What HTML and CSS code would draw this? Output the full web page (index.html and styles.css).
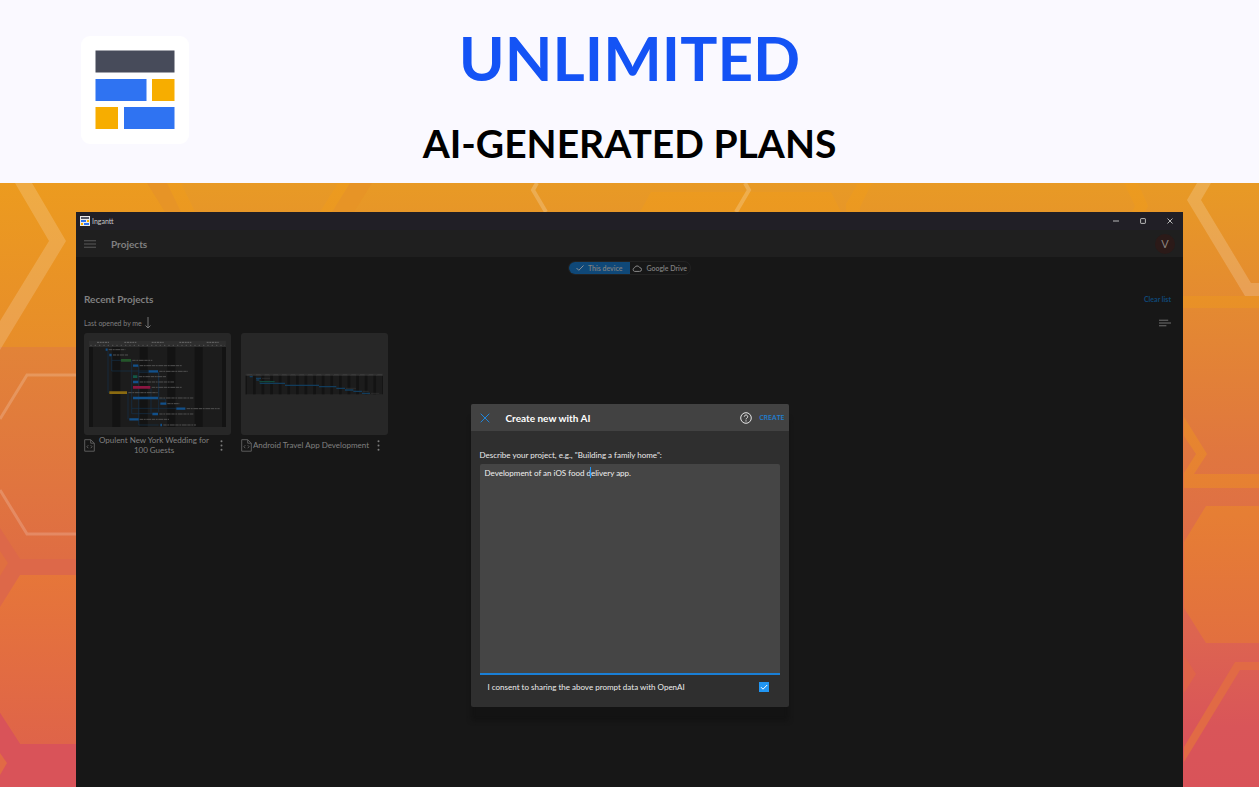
FILE: index.html
```html
<!DOCTYPE html>
<html lang="en">
<head>
<meta charset="utf-8">
<title>Ingantt</title>
<link rel="stylesheet" href="styles.css">
</head>
<body>
<header class="banner">
  <svg class="logo" viewBox="0 0 108 108" aria-label="Ingantt logo">
    <rect width="108" height="108" rx="9" fill="#fff"/>
    <path fill="#474b5a" d="M14.500 14.500h79v22h-79z"/>
    <path fill="#2f73f2" d="M14.500 43h51v22h-51zM43 71h50.500v22H43z"/>
    <path fill="#f7ad00" d="M71 43h22.500v22H71zM14.500 71H37v22H14.500z"/>
  </svg>
  <div class="headline">
    <h1 class="headline-main">UNLIMITED</h1>
    <p class="headline-sub">AI-GENERATED PLANS</p>
  </div>
</header>

<main class="stage">
  <svg class="backdrop" viewBox="0 183 1259 604" preserveAspectRatio="none" aria-hidden="true">
    <defs>
      <linearGradient id="base" x1="0" y1="183" x2="0" y2="787" gradientUnits="userSpaceOnUse">
        <stop offset="0" stop-color="#e89a25"/><stop offset=".2" stop-color="#e48a31"/>
        <stop offset=".45" stop-color="#e0763f"/><stop offset=".75" stop-color="#dd6450"/><stop offset=".9" stop-color="#d95559"/><stop offset="1" stop-color="#d95359"/>
      </linearGradient>
      <linearGradient id="warm" x1="0" y1="183" x2="0" y2="787" gradientUnits="userSpaceOnUse">
        <stop offset="0" stop-color="#ec9b1f"/><stop offset=".27" stop-color="#e78d2a"/>
        <stop offset=".55" stop-color="#e67e34"/><stop offset=".93" stop-color="#df6448"/><stop offset="1" stop-color="#e06a45"/>
      </linearGradient>
      <linearGradient id="mid" x1="0" y1="347" x2="0" y2="560" gradientUnits="userSpaceOnUse">
        <stop offset="0" stop-color="#e28338"/><stop offset="1" stop-color="#df6d43"/>
      </linearGradient>
      <linearGradient id="low" x1="0" y1="575" x2="0" y2="744" gradientUnits="userSpaceOnUse">
        <stop offset="0" stop-color="#e67639"/><stop offset="1" stop-color="#df6449"/>
      </linearGradient>
    </defs>
    <path fill="url(#base)" d="M0 183h1259v604H0z"/>
    <path fill="url(#warm)" d="M0 183h147l18 29H76v135H0z"/>
    <path fill="url(#mid)" d="M0 347h90v212H20L0 528z"/>
    <path fill="#dd6849" d="M0 528l20 31h70v16H20L0 607z"/>
    <path fill="#e06f40" d="M0 551l8 12-8 13z"/>
    <path fill="url(#low)" d="M0 607l20-32h70v169H20L0 713z"/>
    <path fill="#d95359" d="M0 713l20 31h70v43H0z"/>
    <path fill="#e16a45" d="M0 753l7 10-7 12z"/>
    <path fill="#fff" fill-opacity=".17" d="M15 183h17l34 58L0 350v-29l49-80z"/>
    <path fill="none" stroke="#fff" stroke-opacity=".18" stroke-width="3" d="M0 419l27-44h60M0 490l27 44h60"/>
    <path fill="#e79426" d="M147 183h30l18 29h-30zM342 183h30l-18 29h-30z"/>
    <path fill="url(#warm)" d="M167 183h14l14 29h-14zM338 183h12l-18 29h-12zM651 192h180l10 20H640zM858 183h14l-12 24v5h-14v-8zM1124 183h14l10 23-3 6h-13l3-6z"/>
    <path fill="none" stroke="#fff" stroke-opacity=".2" stroke-width="4" d="M537 183l-4 7 13 22M745 183l4 7-13 22"/>
    <path fill="#fff" fill-opacity=".18" d="M1197 183h14l-10 17 50 83h8v13h-14l-58-96z"/>
    <path fill="url(#warm)" d="M1170 296h89v12h-89zM1184 417l23 37-13 20h65v14h-75v-15l12-19-12-18zM1184 542l22-36h53v137h-53l-22-35z"/>
    <path fill="#df6449" d="M1184 655l12 19-12 19z"/>
    <path fill="#e16a45" d="M1259 662h-24l-51 85v15l56-92h19z"/>
  </svg>

  <section class="window">
    <div class="titlebar">
      <svg class="app-icon" viewBox="0 0 10 10" aria-hidden="true"><path fill="#e9e9e9" d="M0 0h10v10H0z"/><path fill="#555866" d="M1 1h8v2H1z"/><path fill="#2f73f2" d="M1 4h5v2H1zM4 7h5v2H4z"/><path fill="#f7ad00" d="M7 4h2v2H7zM1 7h2v2H1z"/></svg>
      <span class="app-name">Ingantt</span>
      <div class="win-controls">
        <button class="win-button" aria-label="Minimize"><svg viewBox="0 0 6 6"><path d="M0 3h6"/></svg></button>
        <button class="win-button" aria-label="Maximize"><svg viewBox="0 0 6 6"><rect x=".6" y=".6" width="4.800" height="4.800" rx=".5"/></svg></button>
        <button class="win-button" aria-label="Close"><svg viewBox="0 0 6 6"><path d="M.5.5l5 5M5.500.5l-5 5"/></svg></button>
      </div>
    </div>
    <div class="appbar">
      <button class="menu-button" aria-label="Menu"><svg viewBox="0 0 13 8"><path d="M0 .5h13M0 4h13M0 7.500h13"/></svg></button>
      <h2 class="appbar-title">Projects</h2>
      <button class="avatar">V</button>
    </div>
    <div class="content">
      <div class="source-switch">
        <button class="source source-active"><svg class="check" viewBox="0 0 8 6"><path d="M.5 3l2.300 2.300L7.500.5"/></svg>This device</button>
        <button class="source"><svg class="cloud" viewBox="0 0 10 7"><path d="M2.600 6.400h4.900a1.900 1.900 0 0 0 .2-3.800A2.800 2.800 0 0 0 2.500 2.800a1.850 1.850 0 0 0 .1 3.600z"/></svg>Google Drive</button>
      </div>
      <div class="row section-head"><h3 class="section-title">Recent Projects</h3><a class="clear" href="#">Clear list</a></div>
      <div class="row sort-row">
        <button class="sort">Last opened by me<svg class="arrow" viewBox="0 0 6 12"><path d="M3 0v11M.5 8.500L3 11l2.500-2.500"/></svg></button>
        <button class="view-mode" aria-label="List view"><svg viewBox="0 0 13 8"><path d="M0 1h10M0 4h13M0 7h8"/></svg></button>
      </div>
      <div class="cards">
        <article class="card">
          <svg class="thumb" viewBox="23 24 441 307" aria-hidden="true">
            <path fill="#1c1c1c" d="M38 66h411v240H38z"/>
            <path fill="#2e2e2e" d="M38 47h411v19H38z"/>
            <path fill="#131313" d="M38 66h12v240H38zM108 66h24v240h-24zM190 66h24v240h-24zM273 66h24v240h-24zM355 66h24v240h-24zM437 66h12v240h-12z"/>
            <path stroke="#686868" stroke-width="3" stroke-dasharray="6 2" d="M62 52h36M144 52h36M226 52h36M309 52h36M391 52h36"/>
            <path stroke="#555" stroke-width="3" stroke-dasharray="4 9" d="M42 61h404"/>
            <path fill="none" stroke="#15324b" stroke-width="2" d="M95 78v124h5M106 94v44h112M106 106h28M166 106v160h62M166 250h134M187 122v178h60M155 203v80M247 142v120M224 190v76M247 142v80h20v12M187 142h60"/>
            <path stroke="#12508a" stroke-width="7" d="M88 74h6M99 90h7M170 122h16M217 139h28M170 171h16M170 219h75M252 236h18M300 251h27M228 267h17M159 283h28M252 300h5"/>
            <path stroke="#24562a" stroke-width="8" d="M134 106h30"/><path stroke="#125746" stroke-width="8" d="M170 155h13"/>
            <path stroke="#8b1641" stroke-width="8" d="M170 187h52"/><path stroke="#8a6a10" stroke-width="8" d="M99 203h53"/>
            <path stroke="#505050" stroke-width="3" stroke-dasharray="10 2 6 2 14 2" d="M97 74h50M110 90h45M168 106h60M190 122h126M249 139h86M187 155h82M190 171h103M226 187h90M156 203h88M249 219h102M273 236h37M331 251h99M249 267h102M190 283h88M261 300h98"/>
          </svg>
          <div class="caption">
            <svg class="file" viewBox="0 0 11 13"><path d="M.7.7h6l3.600 3.500v8H.7zM6.700.7v3.500h3.600M4.300 6.200L2.900 7.700l1.400 1.500M6.700 6.200l1.400 1.500-1.400 1.500"/></svg>
            <span class="name">Opulent New York Wedding for 100 Guests</span>
            <button class="more" aria-label="More options"><svg viewBox="0 0 3 11"><circle cx="1.500" cy="1.200" r="1"/><circle cx="1.500" cy="5.500" r="1"/><circle cx="1.500" cy="9.800" r="1"/></svg></button>
          </div>
        </article>
        <article class="card">
          <svg class="thumb" viewBox="15 24 441 307" aria-hidden="true">
            <path fill="#1c1c1c" d="M29 152h412v56H29z"/><path fill="#303030" d="M29 146h412v7H29z"/>
            <path stroke="#414141" stroke-width="2" stroke-dasharray="14 12" d="M34 149h404"/>
            <path stroke="#131313" stroke-width="56" stroke-dasharray="8 17.800" d="M51 180h389"/>
            <path stroke="#131313" stroke-width="4" d="M31 152v56"/>
            <path fill="none" stroke="#123c5c" stroke-width="4" d="M41 155h9M60 160h15M61 165h9M71 175h76M147 181h102M249 185h52M301 190h26M327 195h25M352 199h26M378 205h24"/>
            <path stroke="#11483b" stroke-width="4" d="M70 170h46"/>
            <path stroke="#353535" stroke-width="2" d="M78 160h24M330 190h30M380 199h18M405 205h25"/>
          </svg>
          <div class="caption">
            <svg class="file" viewBox="0 0 11 13"><path d="M.7.7h6l3.600 3.500v8H.7zM6.700.7v3.500h3.600M4.300 6.200L2.900 7.700l1.400 1.500M6.700 6.200l1.400 1.500-1.400 1.500"/></svg>
            <span class="name">Android Travel App Development</span>
            <button class="more" aria-label="More options"><svg viewBox="0 0 3 11"><circle cx="1.500" cy="1.200" r="1"/><circle cx="1.500" cy="5.500" r="1"/><circle cx="1.500" cy="9.800" r="1"/></svg></button>
          </div>
        </article>
      </div>
    </div>

    <form class="dialog" role="dialog" aria-labelledby="dialog-title">
      <div class="dialog-head">
        <button type="button" class="dialog-close" aria-label="Close"><svg viewBox="0 0 10 10"><path d="M.7.7l8.600 8.600M9.300.7L.7 9.300"/></svg></button>
        <h2 class="dialog-title" id="dialog-title">Create new with AI</h2>
        <button type="button" class="help" aria-label="Help"><svg viewBox="0 0 12 12"><circle cx="6" cy="6" r="5.300"/><path d="M4.300 4.700a1.700 1.700 0 1 1 2.600 1.400c-.6.400-.9.700-.9 1.300"/><path d="M6 8.300v1.200"/></svg></button>
        <button type="button" class="create">CREATE</button>
      </div>
      <div class="dialog-body">
        <label class="prompt-label" for="prompt">Describe your project, e.g., "Building a family home":</label>
        <div class="prompt-box">
          <textarea class="prompt" id="prompt">Development of an iOS food delivery app.</textarea>
          <span class="caret"></span>
        </div>
        <div class="consent">
          <label for="consent">I consent to sharing the above prompt data with OpenAI</label>
          <span class="tick"><input type="checkbox" id="consent" checked><svg viewBox="0 0 10 10" aria-hidden="true"><path d="M2 5.200l2 2L8.200 3"/></svg></span>
        </div>
      </div>
    </form>
  </section>
</main>
</body>
</html>
```
FILE: styles.css
```css
* { box-sizing: border-box; }
body {
  margin: 0;
  min-height: 100vh;
  display: flex;
  flex-direction: column;
  background: #faf9ff;
  font-family: Lato, "Open Sans", sans-serif;
}
h1, h2, h3, p { margin: 0; }
button {
  padding: 0;
  border: 0;
  background: none;
  color: inherit;
  font: inherit;
}
svg { display: block; flex: none; }

/* Banner */
.banner {
  display: grid;
  grid-template-columns: 108px 1fr 108px;
  align-items: start;
  height: 183px;
  padding: 0 81px;
}
.logo { width: 108px; height: 108px; margin-top: 36px; }
.headline { text-align: center; font-weight: 700; }
.headline-main { padding-top: 18px; color: #1453f5; font-size: 62px; line-height: 78px; }
.headline-sub { padding-top: 23px; color: #000; font-size: 39px; line-height: 48px; }

/* Coloured stage behind the app window */
.stage {
  position: relative;
  flex: 1;
  display: flex;
  padding: 29px 76px 0;
}
.backdrop { position: absolute; inset: 0; width: 100%; height: 100%; }
.window {
  position: relative;
  flex: 1;
  background: #171717;
  color: #808080;
  font-size: 7px;
}
.titlebar {
  display: flex;
  align-items: center;
  height: 18px;
  padding: 0 10px 0 4px;
  background: #211f26;
  color: #c8c8c8;
}
.app-icon { width: 10px; height: 10px; margin-right: 2px; }
.win-controls { display: flex; gap: 21px; margin-left: auto; }
.win-button svg { width: 6px; height: 6px; fill: none; stroke: #b8b8b8; }
.appbar {
  display: flex;
  align-items: center;
  height: 27px;
  padding: 0 8px;
  background: #1f1f1f;
}
.menu-button svg { width: 12px; height: 8px; fill: none; stroke: #5f5f5f; }
.appbar-title { margin-left: 15px; font-size: 10px; font-weight: 700; }
.avatar {
  width: 20px;
  height: 20px;
  margin-left: auto;
  border-radius: 50%;
  background: #2b1a18;
  color: #8b8480;
  font-size: 11px;
}
.content { padding: 4px 8px; }
.source-switch {
  display: flex;
  width: 123px;
  height: 14px;
  margin: 0 auto;
  border: 1px solid #222;
  border-radius: 7px;
  overflow: hidden;
}
.source { display: flex; flex: 1; align-items: center; justify-content: center; gap: 4px; font-weight: 600; white-space: nowrap; }
.source-active { background: #0f4878; }
.check { width: 8px; height: 6px; fill: none; stroke: #8a9097; }
.cloud { width: 10px; height: 7px; fill: none; stroke: #8a8a8a; }
.row { display: flex; align-items: center; justify-content: space-between; padding-right: 4px; }
.section-head { margin-top: 17px; height: 14px; }
.section-title { font-size: 10px; font-weight: 700; }
.clear { color: #0f4878; text-decoration: none; font-weight: 700; }
.sort-row { margin-top: 10px; height: 14px; }
.sort { display: flex; align-items: center; gap: 3px; }
.arrow { width: 6px; height: 12px; fill: none; stroke: #777; }
.view-mode svg { width: 12px; height: 8px; fill: none; stroke: #777; }
.cards { display: flex; gap: 10px; margin-top: 3px; }
.card { width: 147px; }
.thumb { width: 100%; border-radius: 3px; background: #272727; }
.caption {
  display: flex;
  align-items: center;
  justify-content: space-between;
  min-height: 20px;
  padding-right: 8px;
  font-size: 8px;
  line-height: 10px;
  text-align: center;
}
.name { flex: 1; padding-right: 7px; }
.file { width: 11px; height: 13px; fill: none; stroke: #5c5c5c; stroke-width: 1; }
.more svg { width: 3px; height: 11px; fill: #7c7c7c; }

/* Dialog over the window */
.dialog {
  position: absolute;
  top: 192px;
  left: 50%;
  width: 318px;
  transform: translateX(-50%);
  border-radius: 2px;
  background: #2f2f2f;
  box-shadow: 0 14px 4px #131313;
  color: #ececec;
  font-size: 8px;
}
.dialog-head {
  display: flex;
  align-items: center;
  height: 27px;
  padding: 0 4px 0 9px;
  border-radius: 2px 2px 0 0;
  background: #424242;
}
.dialog-close svg { width: 10px; height: 10px; fill: none; stroke: #1f86dc; }
.dialog-title { margin-left: 16px; color: #fff; font-size: 10px; font-weight: 700; }
.help { margin-left: auto; }
.help svg { width: 12px; height: 12px; fill: none; stroke: #e6e6e6; }
.create { margin-left: 7px; color: #1f7fd0; font-family: "Open Sans", sans-serif; font-size: 7px; font-weight: 600; }
.dialog-body { padding: 19px 9px 15px; }
.prompt-label { display: block; line-height: 10px; }
.prompt-box { position: relative; display: flex; margin-top: 4px; }
.prompt {
  display: block;
  flex: 1;
  height: 211px;
  padding: 4px 5px;
  border: 0;
  border-bottom: 2px solid #1a7fd6;
  border-radius: 2px 2px 0 0;
  outline: 0;
  resize: none;
  background: #454545;
  color: #f0f0f0;
  font: inherit;
  line-height: 10px;
}
.caret { position: absolute; top: 3px; left: 110px; width: 1px; height: 11px; background: #2196f3; }
.consent { display: flex; align-items: center; justify-content: space-between; margin-top: 7px; padding: 0 11px 0 8px; line-height: 10px; }
.tick { position: relative; }
.tick input { display: block; width: 10px; height: 10px; margin: 0; appearance: none; background: #2196f3; }
.tick svg { position: absolute; inset: 0; fill: none; stroke: #fff; pointer-events: none; }
```
